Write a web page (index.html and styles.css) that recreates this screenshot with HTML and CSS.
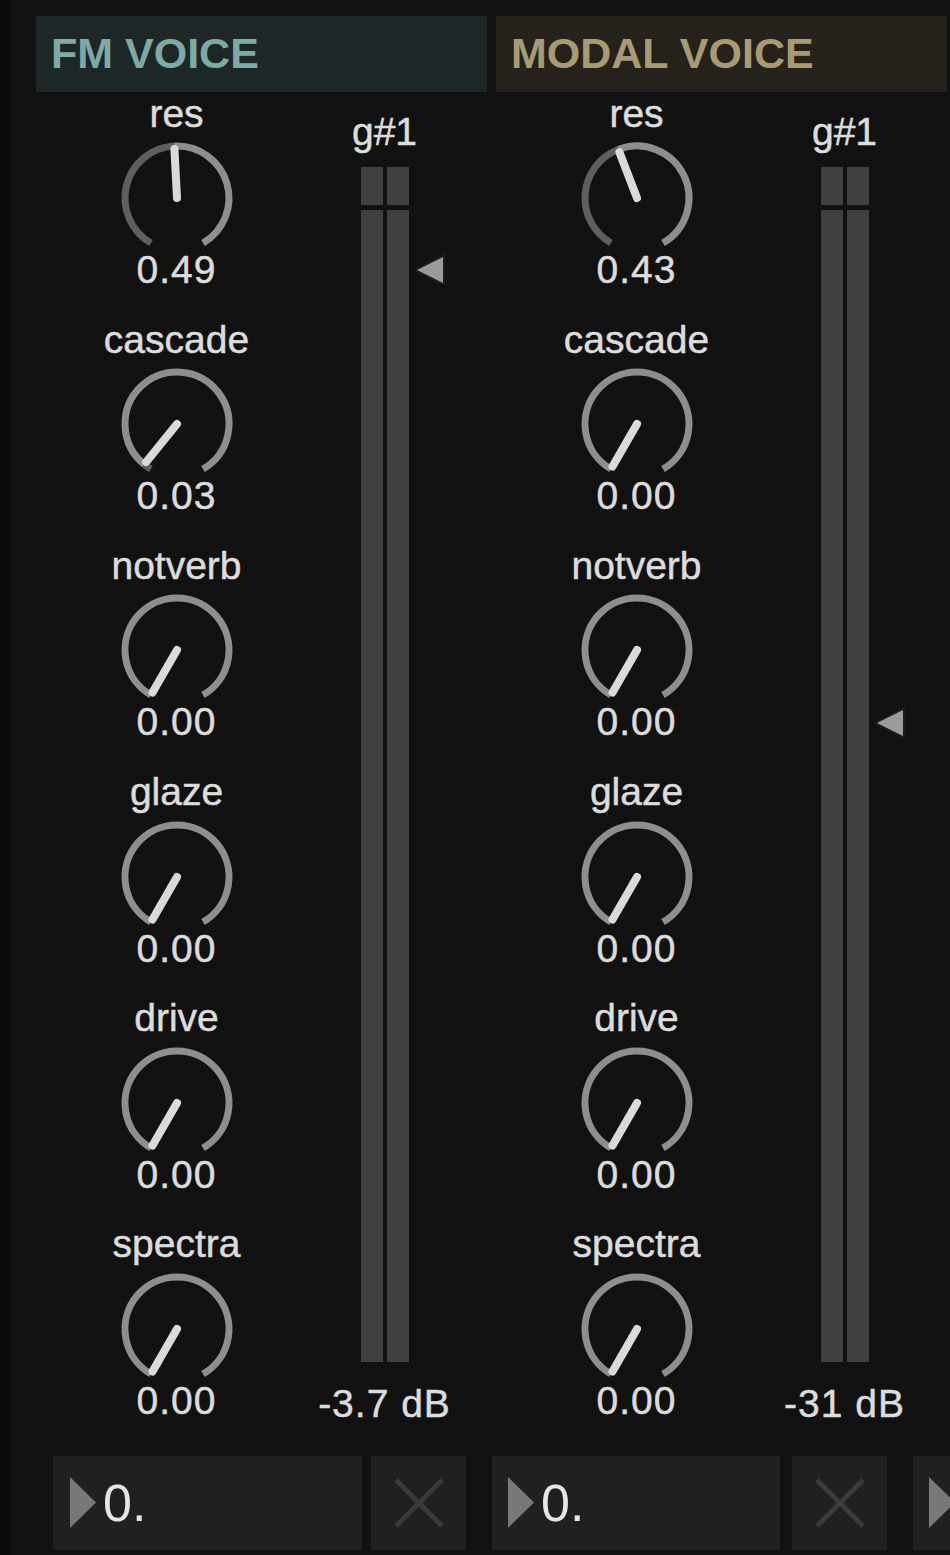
FILE: index.html
```html
<!DOCTYPE html>
<html lang="en">
  <head>
    <meta charset="UTF-8" />
    <meta name="viewport" content="width=device-width, initial-scale=1.0" />
    <title>Voice Rack</title>

    <link rel="stylesheet" href="styles.css">
  </head>
  <body>
    <div class="rack">
      <div class="voices">
        <!-- FM voice -->
        <section class="voice fm">
          <h2 class="voice-title">FM VOICE</h2>
          <div class="voice-body">
            <div class="knobs">
              <div class="knob">
                <span class="knob-label">res</span>
                <svg class="dial" viewBox="-60 -55 120 110">
                  <path class="dial-value" d="M -26 45.03 A 52 52 0 0 1 -2.72 -51.93" />
                  <path class="dial-track" d="M -2.72 -51.93 A 52 52 0 0 1 26 45.03" />
                  <line class="dial-pointer" x1="0" y1="0" x2="-2.56" y2="-48.93" />
                </svg>
                <span class="knob-value">0.49</span>
              </div>
              <div class="knob">
                <span class="knob-label">cascade</span>
                <svg class="dial" viewBox="-60 -55 120 110">
                  <path class="dial-value" d="M -26 45.03 A 52 52 0 0 1 -32.72 40.41" />
                  <path class="dial-track" d="M -32.72 40.41 A 52 52 0 1 1 26 45.03" />
                  <line class="dial-pointer" x1="0" y1="0" x2="-30.84" y2="38.08" />
                </svg>
                <span class="knob-value">0.03</span>
              </div>
              <div class="knob">
                <span class="knob-label">notverb</span>
                <svg class="dial" viewBox="-60 -55 120 110">
                  <path class="dial-track" d="M -26 45.03 A 52 52 0 1 1 26 45.03" />
                  <line class="dial-pointer" x1="0" y1="0" x2="-24.5" y2="42.44" />
                </svg>
                <span class="knob-value">0.00</span>
              </div>
              <div class="knob">
                <span class="knob-label">glaze</span>
                <svg class="dial" viewBox="-60 -55 120 110">
                  <path class="dial-track" d="M -26 45.03 A 52 52 0 1 1 26 45.03" />
                  <line class="dial-pointer" x1="0" y1="0" x2="-24.5" y2="42.44" />
                </svg>
                <span class="knob-value">0.00</span>
              </div>
              <div class="knob">
                <span class="knob-label">drive</span>
                <svg class="dial" viewBox="-60 -55 120 110">
                  <path class="dial-track" d="M -26 45.03 A 52 52 0 1 1 26 45.03" />
                  <line class="dial-pointer" x1="0" y1="0" x2="-24.5" y2="42.44" />
                </svg>
                <span class="knob-value">0.00</span>
              </div>
              <div class="knob">
                <span class="knob-label">spectra</span>
                <svg class="dial" viewBox="-60 -55 120 110">
                  <path class="dial-track" d="M -26 45.03 A 52 52 0 1 1 26 45.03" />
                  <line class="dial-pointer" x1="0" y1="0" x2="-24.5" y2="42.44" />
                </svg>
                <span class="knob-value">0.00</span>
              </div>
            </div>

            <div class="meter-col">
              <span class="meter-note">g#1</span>
              <div class="meter">
                <div class="meter-bar"><i class="meter-peak"></i><i class="meter-level"></i></div>
                <div class="meter-bar"><i class="meter-peak"></i><i class="meter-level"></i></div>
                <svg class="meter-marker" style="top: 87px" viewBox="0 0 32 32">
                  <polygon points="2,16 28,3 28,29" />
                </svg>
              </div>
              <span class="meter-gain">-3.7 dB</span>
            </div>
          </div>
        </section>

        <!-- Modal voice -->
        <section class="voice modal">
          <h2 class="voice-title">MODAL VOICE</h2>
          <div class="voice-body">
            <div class="knobs">
              <div class="knob">
                <span class="knob-label">res</span>
                <svg class="dial" viewBox="-60 -55 120 110">
                  <path class="dial-value" d="M -26 45.03 A 52 52 0 0 1 -18.64 -48.55" />
                  <path class="dial-track" d="M -18.64 -48.55 A 52 52 0 0 1 26 45.03" />
                  <line class="dial-pointer" x1="0" y1="0" x2="-17.56" y2="-45.75" />
                </svg>
                <span class="knob-value">0.43</span>
              </div>
              <div class="knob">
                <span class="knob-label">cascade</span>
                <svg class="dial" viewBox="-60 -55 120 110">
                  <path class="dial-track" d="M -26 45.03 A 52 52 0 1 1 26 45.03" />
                  <line class="dial-pointer" x1="0" y1="0" x2="-24.5" y2="42.44" />
                </svg>
                <span class="knob-value">0.00</span>
              </div>
              <div class="knob">
                <span class="knob-label">notverb</span>
                <svg class="dial" viewBox="-60 -55 120 110">
                  <path class="dial-track" d="M -26 45.03 A 52 52 0 1 1 26 45.03" />
                  <line class="dial-pointer" x1="0" y1="0" x2="-24.5" y2="42.44" />
                </svg>
                <span class="knob-value">0.00</span>
              </div>
              <div class="knob">
                <span class="knob-label">glaze</span>
                <svg class="dial" viewBox="-60 -55 120 110">
                  <path class="dial-track" d="M -26 45.03 A 52 52 0 1 1 26 45.03" />
                  <line class="dial-pointer" x1="0" y1="0" x2="-24.5" y2="42.44" />
                </svg>
                <span class="knob-value">0.00</span>
              </div>
              <div class="knob">
                <span class="knob-label">drive</span>
                <svg class="dial" viewBox="-60 -55 120 110">
                  <path class="dial-track" d="M -26 45.03 A 52 52 0 1 1 26 45.03" />
                  <line class="dial-pointer" x1="0" y1="0" x2="-24.5" y2="42.44" />
                </svg>
                <span class="knob-value">0.00</span>
              </div>
              <div class="knob">
                <span class="knob-label">spectra</span>
                <svg class="dial" viewBox="-60 -55 120 110">
                  <path class="dial-track" d="M -26 45.03 A 52 52 0 1 1 26 45.03" />
                  <line class="dial-pointer" x1="0" y1="0" x2="-24.5" y2="42.44" />
                </svg>
                <span class="knob-value">0.00</span>
              </div>
            </div>

            <div class="meter-col">
              <span class="meter-note">g#1</span>
              <div class="meter">
                <div class="meter-bar"><i class="meter-peak"></i><i class="meter-level"></i></div>
                <div class="meter-bar"><i class="meter-peak"></i><i class="meter-level"></i></div>
                <svg class="meter-marker" style="top: 540px" viewBox="0 0 32 32">
                  <polygon points="2,16 28,3 28,29" />
                </svg>
              </div>
              <span class="meter-gain">-31 dB</span>
            </div>
          </div>
        </section>
      </div>

      <!-- number boxes + clear buttons -->
      <div class="footer">
        <div class="slot">
          <div class="numbox wide">
            <svg class="numbox-arrow" viewBox="0 0 26 51"><polygon points="0,0 26,25.5 0,51" /></svg>
            <span class="numbox-text">0.</span>
          </div>
          <button class="clear">
            <svg viewBox="0 0 50 50"><path d="M2 2 L48 48 M48 2 L2 48" /></svg>
          </button>
        </div>
        <div class="slot loose">
          <div class="numbox">
            <svg class="numbox-arrow" viewBox="0 0 26 51"><polygon points="0,0 26,25.5 0,51" /></svg>
            <span class="numbox-text">0.</span>
          </div>
          <button class="clear">
            <svg viewBox="0 0 50 50"><path d="M2 2 L48 48 M48 2 L2 48" /></svg>
          </button>
        </div>
        <div class="slot">
          <div class="numbox">
            <svg class="numbox-arrow" viewBox="0 0 26 51"><polygon points="0,0 26,25.5 0,51" /></svg>
          </div>
        </div>
      </div>
    </div>
  </body>
</html>
```

FILE: styles.css
```css
body {
  margin: 0;
  background-color: #111111;
  font-family: "Liberation Sans", Arial, sans-serif;
  color: #dcdcdc;
}

.rack {
  width: 950px;
  height: 1555px;
  box-sizing: border-box;
  border-left: 10px solid #0a0a0a;
  padding-top: 16px;
  overflow: hidden;
}

.voices {
  display: flex;
  gap: 9px;
  padding-left: 26px;
}

.voice {
  flex: none;
  width: 451px;
}

.voice-title {
  margin: 0;
  height: 76px;
  padding-left: 15px;
  font-size: 43px;
  font-weight: 700;
  line-height: 74px;
}

.fm .voice-title {
  background-color: #1d2727;
  color: #7fa9a6;
}

.modal .voice-title {
  background-color: #26221b;
  color: #a99a76;
}

.voice-body {
  display: flex;
}

/* knob column */
.knobs {
  width: 281px;
  display: flex;
  flex-direction: column;
  padding-top: 4.5px;
}

.knob {
  height: 226.2px;
  display: flex;
  flex-direction: column;
  align-items: center;
}

.knob-label,
.knob-value,
.meter-note,
.meter-gain {
  font-size: 39px;
  line-height: 34px;
  white-space: nowrap;
  -webkit-text-stroke: 0.5px currentColor;
}

.knob-value {
  letter-spacing: 1px;
}

.dial {
  width: 120px;
  height: 110px;
  margin-top: 12.5px;
  overflow: visible;
}

.dial-track,
.dial-value {
  fill: none;
  stroke-width: 7;
}

.dial-track {
  stroke: #8e8e8e;
}

.dial-value {
  stroke: #5e5e5e;
}

.dial-pointer {
  stroke: #dadada;
  stroke-width: 8;
  stroke-linecap: round;
}

/* level meter */
.meter-col {
  width: 135px;
  display: flex;
  flex-direction: column;
  align-items: center;
}

.meter-note {
  margin-top: 22.5px;
}

.meter {
  position: relative;
  display: flex;
  gap: 4px;
  height: 1195px;
  margin-top: 18.5px;
}

.meter-bar {
  width: 22px;
  display: flex;
  flex-direction: column;
  gap: 5px;
}

.meter-peak {
  height: 38px;
  background-color: #404040;
}

.meter-level {
  flex: 1;
  background-color: #404040;
}

.meter-marker {
  position: absolute;
  left: calc(100% + 6.5px);
  width: 32px;
  height: 32px;
}

.meter-marker polygon {
  fill: #9a9a9a;
  stroke: #1c1c1c;
  stroke-width: 4;
  paint-order: stroke;
}

.meter-gain {
  margin-top: 24.5px;
  letter-spacing: 1px;
}

/* bottom row */
.footer {
  display: flex;
  gap: 26px;
  height: 94px;
  margin-top: 2.3px;
  padding-left: 43px;
}

.slot {
  display: flex;
  gap: 9px;
}

.slot.loose {
  gap: 12px;
}

.numbox {
  width: 288px;
  display: flex;
  align-items: center;
  box-sizing: border-box;
  padding-left: 16px;
  background-color: #202020;
}

.numbox.wide {
  width: 309px;
  padding-left: 17px;
}

.numbox-arrow {
  width: 26px;
  height: 51px;
  fill: #787878;
}

.numbox-text {
  margin-left: 7px;
  font-size: 52px;
  line-height: 1;
  color: #e6e6e6;
}

.clear {
  width: 95px;
  display: flex;
  align-items: center;
  justify-content: center;
  padding: 0;
  border: none;
  background-color: #202020;
}

.clear svg {
  width: 50px;
  height: 50px;
  stroke: #3a3a3a;
  stroke-width: 5;
  fill: none;
}
```
